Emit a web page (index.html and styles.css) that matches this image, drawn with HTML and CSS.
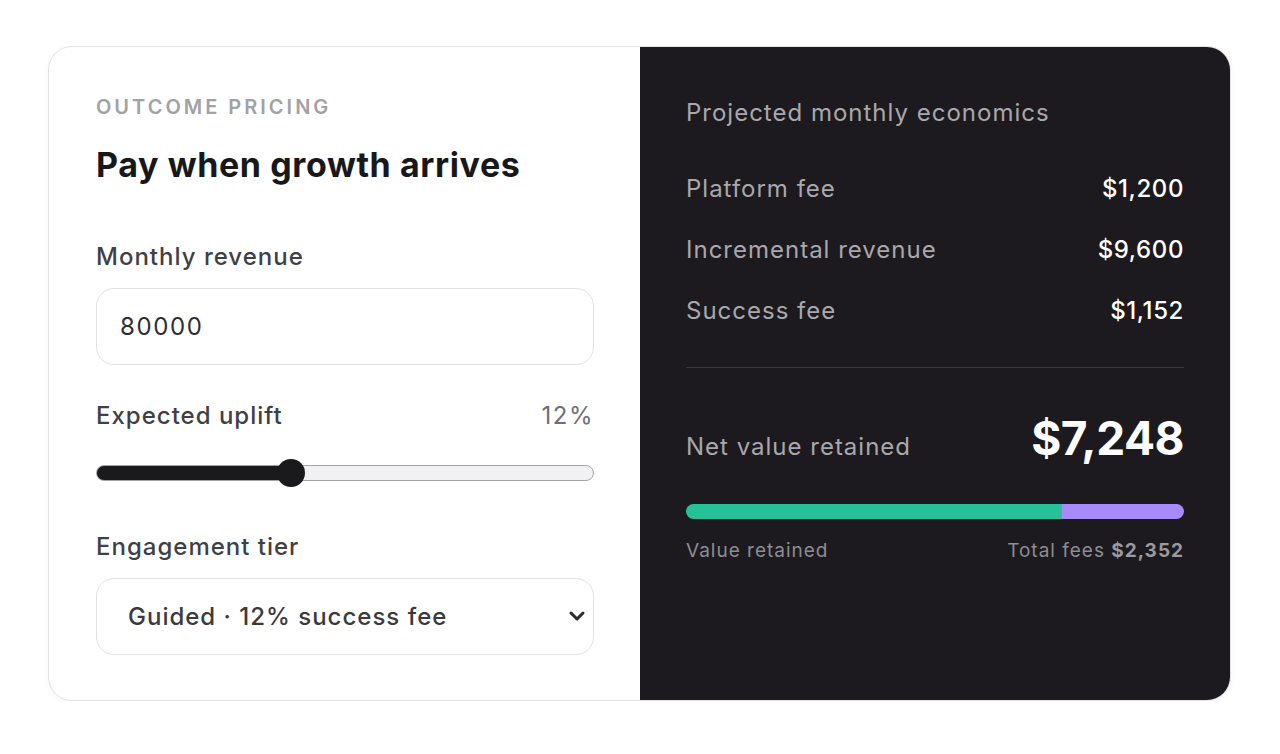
FILE: index.html
```html
<!DOCTYPE html>
<html lang="en">
<head>
<meta charset="utf-8">
<title>Outcome pricing</title>
<link rel="stylesheet" href="styles.css">
</head>
<body>
<main class="card">
  <section class="config">
    <p class="eyebrow">Outcome pricing</p>
    <h1 class="title">Pay when growth arrives</h1>

    <label class="field-label" for="revenue">Monthly revenue</label>
    <input class="text-input" id="revenue" type="text" value="80000">

    <div class="label-row">
      <label class="field-label" for="uplift">Expected uplift</label>
      <span class="label-value">12%</span>
    </div>
    <input class="range" id="uplift" type="range" min="2" max="28" value="12">

    <label class="field-label tier-label" for="tier">Engagement tier</label>
    <div class="select-wrap">
      <select class="select" id="tier">
        <option>Guided · 12% success fee</option>
      </select>
      <svg class="chevron" width="18" height="12" viewBox="0 0 18 12" aria-hidden="true">
        <path d="M3 3 L9 9 L15 3" fill="none" stroke="#2b2b2e" stroke-width="3" stroke-linecap="round" stroke-linejoin="round"/>
      </svg>
    </div>
  </section>

  <section class="summary">
    <h2 class="summary-title">Projected monthly economics</h2>
    <dl class="rows">
      <div class="row"><dt>Platform fee</dt><dd>$1,200</dd></div>
      <div class="row"><dt>Incremental revenue</dt><dd>$9,600</dd></div>
      <div class="row"><dt>Success fee</dt><dd>$1,152</dd></div>
    </dl>
    <div class="net">
      <span class="net-label">Net value retained</span>
      <span class="net-value">$7,248</span>
    </div>
    <div class="bar">
      <div class="bar-retained" style="width:75.5%"></div>
      <div class="bar-fees"></div>
    </div>
    <div class="legend">
      <span>Value retained</span>
      <span>Total fees <strong>$2,352</strong></span>
    </div>
  </section>
</main>
</body>
</html>
```

FILE: styles.css
```css
* { box-sizing: border-box; }

html, body {
  margin: 0;
  padding: 0;
  background: #ffffff;
}

body {
  font-family: Inter, "Noto Sans", "Liberation Sans", sans-serif;
  padding: 46px 49px 0 48px;
}

.card {
  display: grid;
  grid-template-columns: 591px 1fr;
  width: 1183px;
  height: 655px;
  border: 1px solid #e3e3e6;
  border-radius: 24px;
  overflow: hidden;
  background: #ffffff;
  box-shadow: 0 2px 6px rgba(0, 0, 0, 0.04);
}

/* Left column */
.config {
  display: flex;
  flex-direction: column;
  padding: 47px 46px 0 47px;
}

.eyebrow {
  margin: 0;
  font-size: 20px;
  line-height: 26px;
  font-weight: 600;
  letter-spacing: 3px;
  text-transform: uppercase;
  color: #a1a1a6;
}

.title {
  margin: 24px 0 0;
  font-size: 34px;
  line-height: 42px;
  font-weight: 700;
  letter-spacing: 0.6px;
  color: #18181b;
}

.field-label {
  display: block;
  margin-top: 56px;
  font-size: 24px;
  line-height: 30px;
  font-weight: 500;
  letter-spacing: 1px;
  color: #3f3f46;
}

.text-input {
  margin-top: 16px;
  width: 100%;
  height: 77px;
  padding: 0 23px;
  border: 1px solid #e1e1e4;
  border-radius: 18px;
  background: #fff;
  font-family: inherit;
  font-size: 24px;
  letter-spacing: 1.6px;
  color: #2e2e31;
  outline: none;
}

.label-row {
  display: flex;
  justify-content: space-between;
  align-items: baseline;
  margin-top: 36px;
}

.label-row .field-label { margin-top: 0; }

.label-value {
  font-size: 24px;
  line-height: 30px;
  letter-spacing: 1.5px;
  color: #6e6e75;
}

.range {
  -webkit-appearance: none;
  appearance: none;
  margin: 28px 0 0;
  width: 100%;
  height: 28px;
  background: transparent;
}

.range::-webkit-slider-runnable-track {
  height: 16px;
  border-radius: 8px;
  border: 1px solid #a3a3a8;
  background: linear-gradient(to right, #1a191c 0, #1a191c 39%, #f1f0f3 39%, #f1f0f3 100%);
}

.range::-webkit-slider-thumb {
  -webkit-appearance: none;
  appearance: none;
  width: 28px;
  height: 28px;
  margin-top: -7px;
  border-radius: 50%;
  background: #1a191c;
  border: none;
}

.tier-label { margin-top: 45px; }

.select-wrap {
  position: relative;
  margin-top: 16px;
}

.select {
  -webkit-appearance: none;
  appearance: none;
  width: 100%;
  height: 77px;
  padding: 0 50px 0 31px;
  border: 1px solid #e1e1e4;
  border-radius: 18px;
  background: #fff;
  font-family: inherit;
  font-size: 24px;
  font-weight: 500;
  letter-spacing: 1px;
  color: #3a3a3e;
  outline: none;
}

.chevron {
  position: absolute;
  right: 8px;
  top: 32px;
  pointer-events: none;
}

/* Right column */
.summary {
  display: flex;
  flex-direction: column;
  background: #1c1a1e;
  padding: 50px 46px 0 46px;
  color: #a3a3a8;
}

.summary-title {
  margin: 0;
  font-size: 24px;
  line-height: 32px;
  font-weight: 400;
  letter-spacing: 1px;
  color: #a8a8ad;
}

.rows {
  margin: 44px 0 0;
  padding-bottom: 40px;
  border-bottom: 1px solid #3a393e;
  display: flex;
  flex-direction: column;
  gap: 29px;
}

.row {
  display: flex;
  justify-content: space-between;
  align-items: baseline;
  font-size: 24px;
  line-height: 32px;
  letter-spacing: 1px;
}

.row dt { color: #a8a8ad; }

.row dd {
  margin: 0;
  color: #ffffff;
  font-weight: 500;
  letter-spacing: 0.6px;
}

.net {
  display: flex;
  justify-content: space-between;
  align-items: baseline;
  margin-top: 42px;
}

.net-label {
  font-size: 24px;
  letter-spacing: 1px;
  color: #a8a8ad;
}

.net-value {
  font-size: 46px;
  line-height: 56px;
  font-weight: 700;
  letter-spacing: -0.5px;
  color: #ffffff;
}

.bar {
  display: flex;
  height: 15px;
  margin-top: 38px;
  border-radius: 8px;
  overflow: hidden;
}

.bar-retained { background: #27c199; }
.bar-fees { flex: 1; background: #a78bfa; }

.legend {
  display: flex;
  justify-content: space-between;
  margin-top: 20px;
  font-size: 19px;
  line-height: 24px;
  letter-spacing: 1px;
  color: #8d8d93;
}

.legend strong {
  font-weight: 700;
  color: #9a9aa0;
}
```
